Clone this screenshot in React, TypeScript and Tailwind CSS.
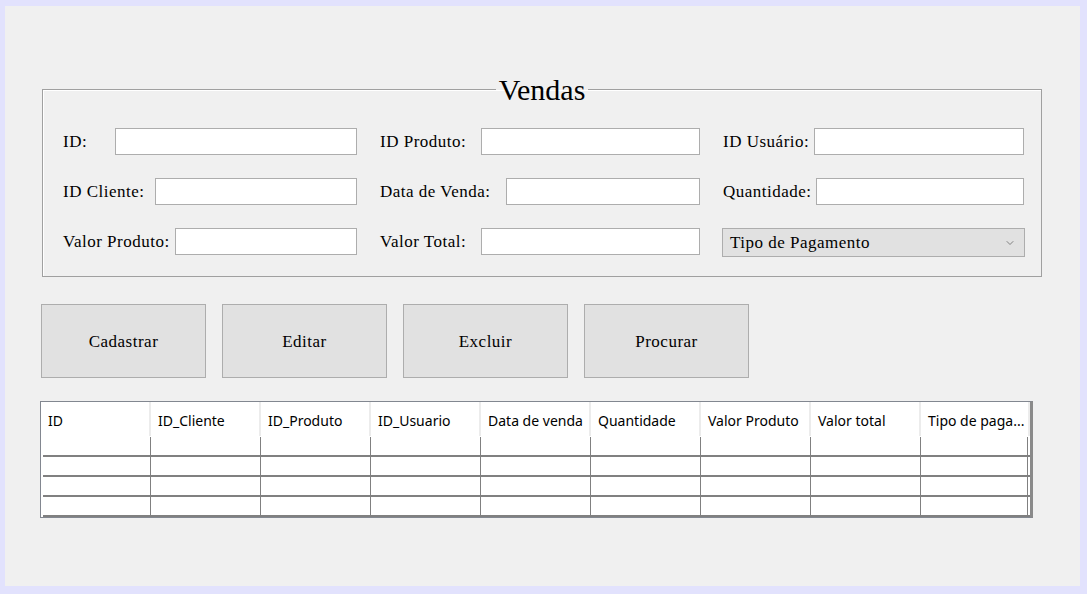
import React from "react";
import { ChevronDown } from "lucide-react";

const serif = { fontFamily: '"Liberation Serif", "Times New Roman", serif' };
const sans = { fontFamily: '"Noto Sans", "Open Sans", sans-serif' };

const columns = [
  "ID",
  "ID_Cliente",
  "ID_Produto",
  "ID_Usuario",
  "Data de venda",
  "Quantidade",
  "Valor Produto",
  "Valor total",
  "Tipo de paga...",
];

function Field({ label, width }: { label: string; width: number }) {
  return (
    <div className="flex items-center justify-between h-[27px]">
      <span className="text-[17px] tracking-[0.5px] text-black pt-[1px]">{label}</span>
      <input
        className="h-[27px] bg-white border border-[#adadad] outline-none"
        style={{ width }}
      />
    </div>
  );
}

export default function App() {
  return (
    <div className="w-[1087px] h-[594px] border-t-[6px] border-l-[5px] border-r-[7px] border-b-[8px] border-[#e2e2fd] bg-[#f0f0f0]">
      <div className="pl-[37px] pt-[66px]" style={serif}>
        {/* Vendas group box */}
        <fieldset className="w-[1000px] h-[205px] border border-[#a0a0a0] shadow-[inset_1px_1px_0_#ffffff]">
          <legend className="mx-auto px-[3px] text-[30px] leading-[32px] pt-[2px] text-black">Vendas</legend>
          <div className="grid grid-cols-[294px_320px_301px] gap-x-[23px] gap-y-[23px] pl-[20px] pt-[22px]">
            <Field label="ID:" width={242} />
            <Field label="ID Produto:" width={219} />
            <Field label="ID Usuário:" width={210} />
            <Field label="ID Cliente:" width={202} />
            <Field label="Data de Venda:" width={194} />
            <Field label="Quantidade:" width={208} />
            <Field label="Valor Produto:" width={182} />
            <Field label="Valor Total:" width={219} />
            <div className="flex items-center justify-between h-[29px] -ml-[1px] -mr-[1px] pl-[7px] pr-[8px] bg-[#e1e1e1] border border-[#adadad]">
              <span className="text-[17px] tracking-[0.5px] text-black pt-[1px]">Tipo de Pagamento</span>
              <ChevronDown className="w-[12px] h-[12px] text-[#606060]" strokeWidth={1.5} />
            </div>
          </div>
        </fieldset>

        {/* buttons */}
        <div className="flex gap-[16px] mt-[27px] -ml-[1px]">
          {["Cadastrar", "Editar", "Excluir", "Procurar"].map((b) => (
            <button
              key={b}
              className="w-[165px] h-[74px] bg-[#e1e1e1] border border-[#adadad] text-[17px] tracking-[0.5px] text-black pt-[2px]"
            >
              {b}
            </button>
          ))}
        </div>

        {/* grid */}
        <div className="w-[993px] mt-[23px] -ml-[2px] border border-[#828790] border-r-[3px] border-r-[#8a8a8a] bg-[#f0f0f0]" style={sans}>
          <div className="flex h-[34px] bg-white">
            {columns.map((c, i) => (
              <div
                key={c}
                className={`flex items-center pl-[7px] pt-[3px] border-r-[2px] border-[#ececec] text-[14px] text-black whitespace-nowrap overflow-hidden ${i === 8 ? "w-[109px]" : "w-[110px]"}`}
              >
                {c}
              </div>
            ))}
          </div>
          <div className="pl-[2px] pt-[1px] bg-white">
            {[0, 1, 2, 3].map((r) => (
              <div key={r} className="flex h-[20px] border-b-[2px] border-[#808080]">
                {columns.map((c, i) => (
                  <div
                    key={c}
                    className={`h-full bg-white border-r border-[#808080] ${i === 0 ? "w-[108px]" : i === 8 ? "w-[107px]" : "w-[110px]"}`}
                  />
                ))}
              </div>
            ))}
          </div>
        </div>
      </div>
    </div>
  );
}
